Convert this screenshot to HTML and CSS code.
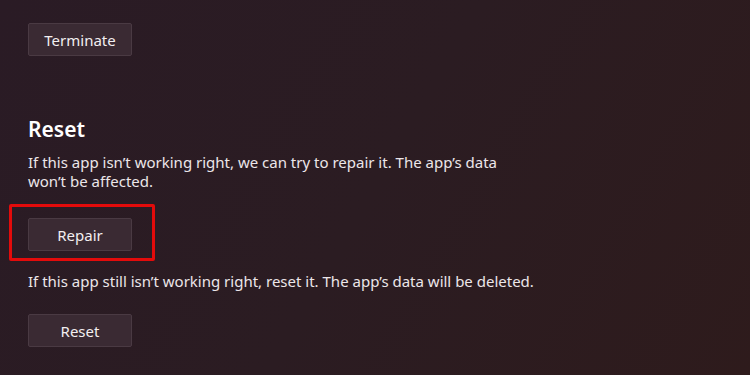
FILE: index.html
```html
<!DOCTYPE html>
<html lang="en">
<head>
<meta charset="utf-8">
<title>App settings - Reset</title>
<link rel="stylesheet" href="styles.css">
</head>
<body>
<main class="page">
  <section class="block">
    <button class="btn">Terminate</button>
  </section>
  <section class="block reset">
    <h2 class="title">Reset</h2>
    <p class="desc">If this app isn’t working right, we can try to repair it. The app’s data<br>won’t be affected.</p>
    <div class="highlight">
      <button class="btn">Repair</button>
    </div>
    <p class="desc desc-2">If this app still isn’t working right, reset it. The app’s data will be deleted.</p>
    <button class="btn btn-reset">Reset</button>
  </section>
</main>
</body>
</html>
```
FILE: styles.css
```css
html, body {
  margin: 0;
  height: 100%;
}
body {
  background: linear-gradient(120deg, #2a1b25 0%, #2b1c22 50%, #2e1b1c 100%);
  font-family: "Noto Sans", "Open Sans", sans-serif;
  color: #ece6e9;
  overflow: hidden;
}
.page {
  padding: 23px 0 0 28px;
}
.block {
  display: flex;
  flex-direction: column;
  align-items: flex-start;
}
.btn {
  width: 104px;
  height: 33px;
  box-sizing: border-box;
  background: #3a2a33;
  border: 1px solid #4a3a43;
  border-radius: 2px;
  color: #f2eef0;
  font-family: inherit;
  font-size: 15px;
  padding: 0;
}
.title {
  margin: 59px 0 0;
  font-size: 21px;
  font-weight: 600;
  color: #ffffff;
  line-height: 28px;
}
.desc {
  margin: 10px 0 0;
  font-size: 15px;
  line-height: 19px;
  color: #ece6e9;
}
.highlight {
  position: relative;
  margin-top: 27px;
}
.highlight::after {
  content: "";
  position: absolute;
  left: -19px;
  top: -14px;
  right: -23px;
  bottom: -10px;
  border: 3px solid #e30b0b;
  border-radius: 2px;
}
.desc-2 {
  margin-top: 21px;
}
.btn-reset {
  margin-top: 23px;
}
```
